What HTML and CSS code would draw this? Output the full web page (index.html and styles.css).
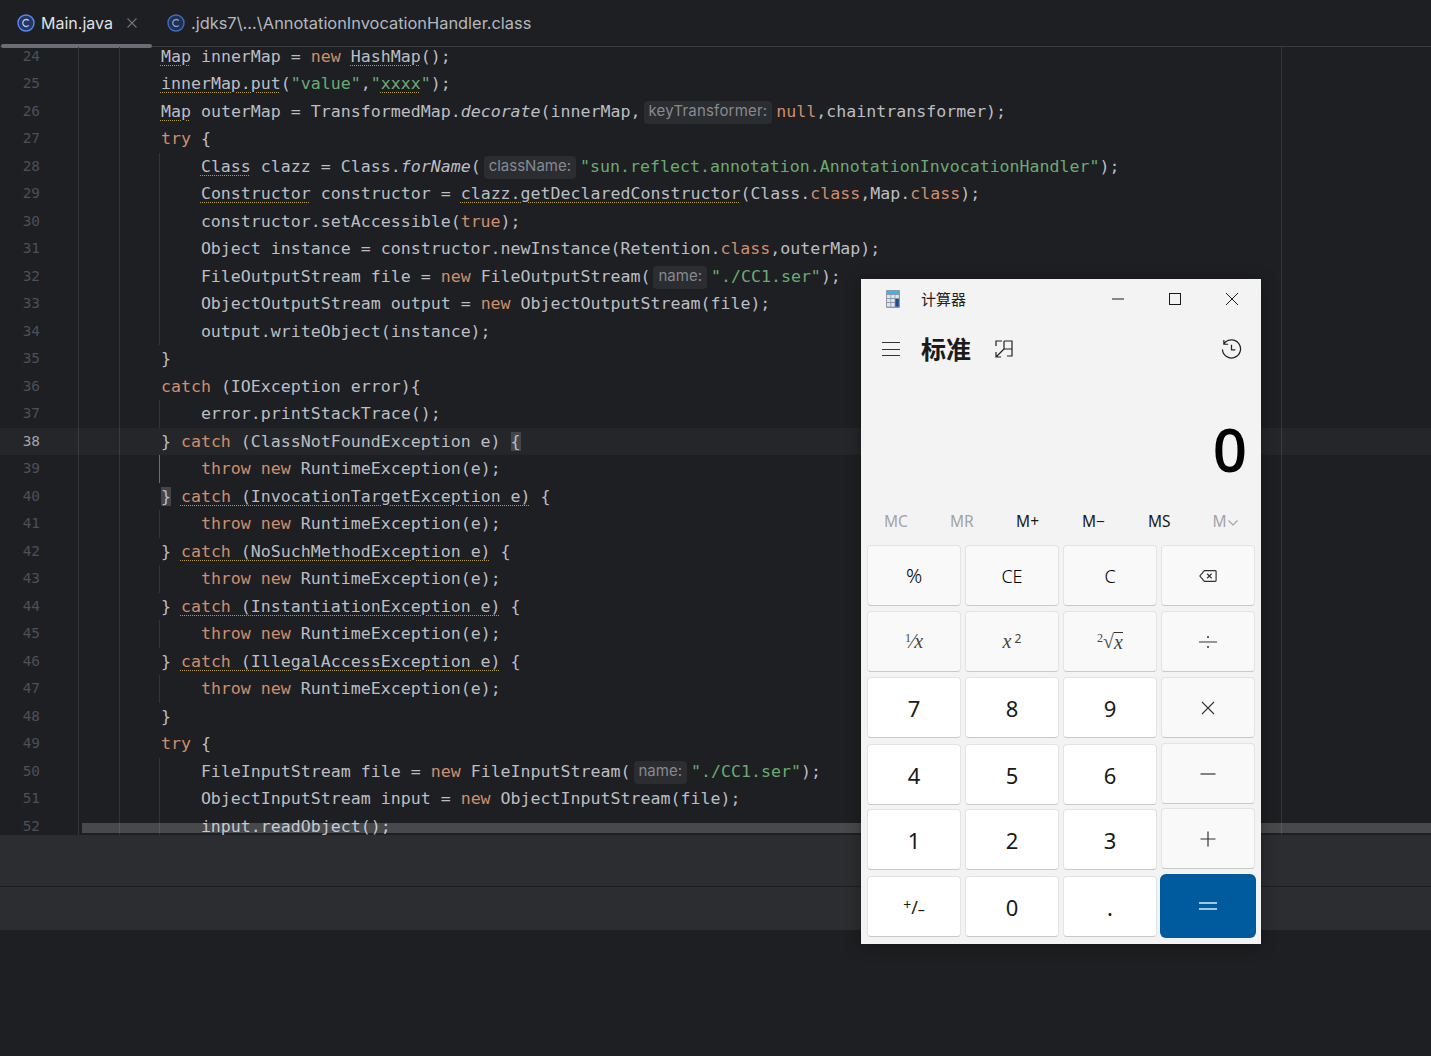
FILE: index.html
```html
<!DOCTYPE html>
<html lang="zh-CN">
<head>
  <meta charset="UTF-8">
  <title>Main.java</title>
  <link rel="stylesheet" href="styles.css">
</head>
<body>
  <div class="tabs">
    <div class="tab active">
      <svg class="tab-icon" viewBox="0 0 18 18"><circle cx="9" cy="9" r="8" fill="#26365c" stroke="#548af7" stroke-width="1.4"/><path d="M11.800 6.600A3.500 3.500 0 1 0 11.800 11.400" fill="none" stroke="#a9c3fa" stroke-width="1.300"/></svg>
      <span>Main.java</span>
      <svg class="tab-close" viewBox="0 0 10 10"><path d="M.5.5l9 9M9.5.5l-9 9" stroke="#6f737a" stroke-width="1.1"/></svg>
    </div>
    <div class="tab other">
      <svg class="tab-icon" viewBox="0 0 18 18"><circle cx="9" cy="9" r="8" fill="#22304f" stroke="#3f6bc4" stroke-width="1.4"/><path d="M11.800 6.600A3.500 3.500 0 1 0 11.800 11.400" fill="none" stroke="#7f9bd6" stroke-width="1.300"/></svg>
      <span>.jdks7\...\AnnotationInvocationHandler.class</span>
    </div>
  </div>

  <div class="editor">
    <div class="lines">
      <div class="line"><span class="num">24</span><code>        <u>Map</u> innerMap = <b>new</b> <u>HashMap</u>();</code></div>
      <div class="line"><span class="num">25</span><code>        <u>innerMap.put</u>(<s>"value"</s>,<s>"<u>xxxx</u>"</s>);</code></div>
      <div class="line"><span class="num">26</span><code>        <u>Map</u> outerMap = TransformedMap.<i>decorate</i>(innerMap,<span class="hint long">keyTransformer:</span><b>null</b>,chaintransformer);</code></div>
      <div class="line"><span class="num">27</span><code>        <b>try</b> {</code></div>
      <div class="line in"><span class="num">28</span><code>            <u>Class</u> clazz = Class.<i>forName</i>(<span class="hint">className:</span><s>"sun.reflect.annotation.AnnotationInvocationHandler"</s>);</code></div>
      <div class="line in"><span class="num">29</span><code>            <u>Constructor</u> constructor = <u>clazz.getDeclaredConstructor</u>(Class.<b>class</b>,Map.<b>class</b>);</code></div>
      <div class="line in"><span class="num">30</span><code>            constructor.setAccessible(<b>true</b>);</code></div>
      <div class="line in"><span class="num">31</span><code>            Object instance = constructor.newInstance(Retention.<b>class</b>,outerMap);</code></div>
      <div class="line in"><span class="num">32</span><code>            FileOutputStream file = <b>new</b> FileOutputStream(<span class="hint">name:</span><s>"./CC1.ser"</s>);</code></div>
      <div class="line in"><span class="num">33</span><code>            ObjectOutputStream output = <b>new</b> ObjectOutputStream(file);</code></div>
      <div class="line in"><span class="num">34</span><code>            output.writeObject(instance);</code></div>
      <div class="line"><span class="num">35</span><code>        }</code></div>
      <div class="line"><span class="num">36</span><code>        <b>catch</b> (IOException error){</code></div>
      <div class="line in"><span class="num">37</span><code>            error.printStackTrace();</code></div>
      <div class="line current"><span class="num">38</span><code>        } <b>catch</b> (ClassNotFoundException e) <em>{</em></code></div>
      <div class="line in hot"><span class="num">39</span><code>            <b>throw</b> <b>new</b> RuntimeException(e);</code></div>
      <div class="line"><span class="num">40</span><code>        <em>}</em> <u><b>catch</b> (InvocationTargetException e)</u> {</code></div>
      <div class="line in"><span class="num">41</span><code>            <b>throw</b> <b>new</b> RuntimeException(e);</code></div>
      <div class="line"><span class="num">42</span><code>        } <u><b>catch</b> (NoSuchMethodException e)</u> {</code></div>
      <div class="line in"><span class="num">43</span><code>            <b>throw</b> <b>new</b> RuntimeException(e);</code></div>
      <div class="line"><span class="num">44</span><code>        } <u><b>catch</b> (InstantiationException e)</u> {</code></div>
      <div class="line in"><span class="num">45</span><code>            <b>throw</b> <b>new</b> RuntimeException(e);</code></div>
      <div class="line"><span class="num">46</span><code>        } <u><b>catch</b> (IllegalAccessException e)</u> {</code></div>
      <div class="line in"><span class="num">47</span><code>            <b>throw</b> <b>new</b> RuntimeException(e);</code></div>
      <div class="line"><span class="num">48</span><code>        }</code></div>
      <div class="line"><span class="num">49</span><code>        <b>try</b> {</code></div>
      <div class="line in"><span class="num">50</span><code>            FileInputStream file = <b>new</b> FileInputStream(<span class="hint">name:</span><s>"./CC1.ser"</s>);</code></div>
      <div class="line in"><span class="num">51</span><code>            ObjectInputStream input = <b>new</b> ObjectInputStream(file);</code></div>
      <div class="line in"><span class="num">52</span><code>            input.readObject();</code></div>
    </div>
    <div class="hscroll"></div>
  </div>

  <div class="panel"></div>
  <div class="panel short"></div>

  <div class="calc">
    <div class="calc-title">
      <svg class="calc-logo" viewBox="0 0 16 18">
        <rect x="1" y="0" width="14" height="18" rx="1" fill="#8d9aa6"/>
        <rect x="2" y="1" width="12" height="3" fill="#35b6ee"/>
        <g fill="#dfe5ea">
          <rect x="2" y="5" width="3.4" height="3"/><rect x="6.2" y="5" width="3.4" height="3"/><rect x="10.4" y="5" width="3.4" height="3"/>
          <rect x="2" y="9" width="3.4" height="3"/><rect x="6.2" y="9" width="3.4" height="3"/>
          <rect x="2" y="13" width="3.4" height="3.6"/><rect x="6.2" y="13" width="3.4" height="3.6"/>
        </g>
        <rect x="10.4" y="9" width="3.4" height="7.6" fill="#17508f"/>
      </svg>
      <span class="calc-name">计算器</span>
      <div class="win-btns">
        <svg viewBox="0 0 14 14"><path d="M1 7h12" stroke="#1a1a1a"/></svg>
        <svg viewBox="0 0 14 14"><rect x="1.5" y="1.5" width="11" height="11" fill="none" stroke="#1a1a1a"/></svg>
        <svg viewBox="0 0 14 14"><path d="M1 1l12 12M13 1L1 13" stroke="#1a1a1a"/></svg>
      </div>
    </div>

    <div class="calc-head">
      <svg class="menu-icon" viewBox="0 0 18 14"><path d="M0 .5h18M0 7.500h18M0 13.500h18" stroke="#333"/></svg>
      <span class="mode">标准</span>
      <svg class="overlay-icon" viewBox="0 0 18 18"><path d="M1 6V1h6M9 1h8v15h-5M9 1v8h8M9 9L1 17M1 12v5h5" fill="none" stroke="#222" stroke-width="1.200"/></svg>
      <svg class="history-icon" viewBox="0 0 22 22"><path d="M3.500 4.500A9.500 9.500 0 1 1 1.500 11M3 1v4.500h4.500M11 6v5.500h4" fill="none" stroke="#222" stroke-width="1.300"/></svg>
    </div>

    <div class="display">0</div>

    <div class="memory">
      <span class="off">MC</span><span class="off">MR</span><span>M+</span><span>M&minus;</span><span>MS</span>
      <span class="off">M<svg class="chev" viewBox="0 0 10 6"><path d="M.5.500L5 5 9.500.500" fill="none" stroke="#a3a3a3" stroke-width="1.100"/></svg></span>
    </div>

    <div class="keys">
      <button class="key fn big">%</button>
      <button class="key fn">CE</button>
      <button class="key fn">C</button>
      <button class="key fn"><svg class="op-icon" viewBox="0 0 20 14"><path d="M6 1h12a1 1 0 0 1 1 1v10a1 1 0 0 1-1 1H6L1 7z" fill="none" stroke="#333" stroke-width="1.300"/><path d="M9 4.500l5 5M14 4.500l-5 5" stroke="#333" stroke-width="1.300"/></svg></button>

      <button class="key fn math"><sup>1</sup>&frasl;<i>x</i></button>
      <button class="key fn math"><i>x</i><sup class="gap">2</sup></button>
      <button class="key fn math"><sup>2</sup>&radic;<i class="over">x</i></button>
      <button class="key fn"><svg class="op-icon" viewBox="0 0 18 14"><path d="M0 7h18" stroke="#333"/><circle cx="9" cy="2" r="1" fill="#333"/><circle cx="9" cy="12" r="1" fill="#333"/></svg></button>

      <button class="key num-key">7</button>
      <button class="key num-key">8</button>
      <button class="key num-key">9</button>
      <button class="key fn"><svg class="op-icon" viewBox="0 0 14 14"><path d="M1 1l12 12M13 1L1 13" stroke="#333" stroke-width="1.100"/></svg></button>

      <button class="key num-key">4</button>
      <button class="key num-key">5</button>
      <button class="key num-key">6</button>
      <button class="key fn raised"><svg class="op-icon large" viewBox="0 0 16 16"><path d="M.5 8h15" stroke="#333" stroke-width="1.200"/></svg></button>

      <button class="key num-key">1</button>
      <button class="key num-key">2</button>
      <button class="key num-key">3</button>
      <button class="key fn raised"><svg class="op-icon large" viewBox="0 0 16 16"><path d="M.5 8h15M8 .5v15" stroke="#333" stroke-width="1.200"/></svg></button>

      <button class="key num-key sign"><sup>+</sup>/<sub>&ndash;</sub></button>
      <button class="key num-key">0</button>
      <button class="key num-key">.</button>
      <button class="key equals"><svg class="op-icon" viewBox="0 0 18 10"><path d="M0 2h18M0 8h18" stroke="#dbe8f4" stroke-width="1.500"/></svg></button>
    </div>
  </div>
</body>
</html>
```

FILE: styles.css
```css
body {
  margin: 0;
  height: 1056px;
  overflow: hidden;
  background-color: #1e1f22;
  font-family: Inter, "Noto Sans", sans-serif;
}

/* tabs */
.tabs {
  display: flex;
  height: 46px;
  border-bottom: 1px solid #393b40;
  box-sizing: content-box;
}
.tab {
  position: relative;
  display: flex;
  align-items: center;
  gap: 6px;
  height: 46px;
  padding: 0 0 0 17px;
  font-size: 16px;
  color: #dfe1e5;
}
.tab.active {
  width: 152px;
  box-sizing: border-box;
}
.tab.active::after {
  content: "";
  position: absolute;
  left: 1px;
  right: 0;
  top: 44px;
  height: 4px;
  border-radius: 2px;
  background-color: #6a6d73;
}
.tab.other {
  padding-left: 15px;
  font-size: 16.4px;
  color: #b4b8bf;
}
.tab-icon {
  flex: none;
  width: 18px;
  height: 18px;
}
.tab-close {
  flex: none;
  width: 10px;
  height: 10px;
  margin-left: 8px;
}

/* editor */
.editor {
  position: relative;
  height: 788px;
  overflow: hidden;
  background-image:
    linear-gradient(#313438, #313438),
    linear-gradient(#313438, #313438),
    linear-gradient(#313438, #313438);
  background-size: 1px 100%;
  background-position: 78px 0, 119px 0, 1281px 0;
  background-repeat: no-repeat;
}
.lines {
  margin-top: -4.5px;
}
.line {
  display: flex;
  height: 27.5px;
  line-height: 27.5px;
  font-family: "DejaVu Sans Mono", monospace;
  font-size: 16.6px;
  color: #bcbec4;
  white-space: pre;
}
.line.in {
  background: linear-gradient(#313438, #313438) 159px 0 / 1px 100% no-repeat;
}
.line.hot {
  background-image: linear-gradient(#6b6e75, #6b6e75);
}
.line.current {
  background-color: rgba(255, 255, 255, 0.035);
}
.num {
  flex: none;
  width: 40px;
  text-align: right;
  font-size: 14.4px;
  color: #4b5059;
}
.current .num {
  color: #a1a3ab;
}
code {
  margin-left: 41px;
  font-family: inherit;
}
code b {
  font-weight: normal;
  color: #cf8e6d;
}
code s {
  text-decoration: none;
  color: #6aab73;
}
code i {
  font-style: italic;
}
code u {
  text-decoration: underline dotted #b39b45 1px;
  text-underline-offset: 3px;
}
code em {
  font-style: normal;
  background-color: #43454a;
}
.hint {
  display: inline-block;
  height: 23px;
  line-height: 20px;
  margin: 0 4px 0 3px;
  padding: 0 5px;
  border-radius: 4px;
  background-color: #2b2d30;
  font-family: Inter, "Noto Sans", sans-serif;
  font-size: 15px;
  color: #868a91;
  vertical-align: 1px;
}
.hint.long {
  letter-spacing: 0.2px;
}
.hscroll {
  position: absolute;
  left: 82px;
  right: 0;
  top: 776px;
  height: 10px;
  background-color: rgba(255, 255, 255, 0.19);
}

/* bottom panels */
.panel {
  height: 51px;
  background-color: #2b2d30;
  border-bottom: 1px solid #1e1f22;
}
.panel.short {
  height: 43px;
  border-bottom: 0;
}

/* calculator window */
.calc {
  position: absolute;
  left: 861px;
  top: 279px;
  width: 400px;
  height: 665px;
  display: flex;
  flex-direction: column;
  background-color: #f3f3f3;
  box-shadow: 0 2px 14px rgba(0, 0, 0, 0.35);
  font-family: "Open Sans", "Noto Sans CJK SC", sans-serif;
  color: #1a1a1a;
}
.calc-title {
  display: flex;
  align-items: center;
  height: 40px;
  padding-left: 24px;
}
.calc-logo {
  width: 16px;
  height: 18px;
}
.calc-name {
  margin: -2px 0 0 20px;
  font-family: "Noto Sans CJK SC", sans-serif;
  font-size: 15px;
  color: #222;
}
.win-btns {
  display: flex;
  gap: 43px;
  margin-left: auto;
  margin-right: 22px;
}
.win-btns svg {
  width: 14px;
  height: 14px;
}
.calc-head {
  display: flex;
  align-items: center;
  height: 60px;
  padding-left: 21px;
}
.menu-icon {
  width: 18px;
  height: 14px;
}
.mode {
  margin: -2px 0 0 21px;
  font-family: "Noto Sans CJK SC", sans-serif;
  font-size: 25px;
  font-weight: 700;
  color: #1b1b1b;
}
.overlay-icon {
  width: 18px;
  height: 18px;
  margin-left: 24px;
}
.history-icon {
  width: 21px;
  height: 21px;
  margin-left: auto;
  margin-right: 19px;
}
.display {
  height: 124px;
  padding-right: 14px;
  line-height: 140px;
  text-align: right;
  font-size: 60px;
  font-weight: 600;
  color: #000;
}
.memory {
  display: grid;
  grid-template-columns: repeat(6, 1fr);
  height: 36px;
  padding: 0 3px 0 2px;
  line-height: 36px;
  text-align: center;
  font-family: "Noto Sans", sans-serif;
  font-size: 15.5px;
}
.memory .off {
  color: #a3a3a3;
}
.chev {
  width: 10px;
  height: 6px;
  margin-left: 1px;
  vertical-align: 1px;
}
.keys {
  display: grid;
  grid-template-columns: repeat(4, 94px);
  grid-template-rows: 66px 66px 67px 65px 67px 62px;
  column-gap: 4px;
  padding: 6px;
}
.key {
  display: flex;
  align-items: center;
  justify-content: center;
  height: 61px;
  padding: 0;
  border: 1px solid #e3e3e3;
  border-bottom-color: #c9c9c9;
  border-radius: 4px;
  font-family: "Noto Sans", sans-serif;
  font-size: 18px;
  font-weight: 300;
  color: #000;
}
.key.fn {
  background-color: #f9f9f9;
}
.key.big {
  font-size: 20px;
}
.key.num-key {
  background-color: #fff;
  font-size: 22px;
  font-weight: 400;
  color: #1a1a1a;
}
.key.raised {
  margin-top: -1px;
}
.key.math {
  font-family: "Liberation Serif", serif;
  font-size: 20px;
  font-weight: 400;
  color: #444;
}
.key sup {
  align-self: flex-start;
  margin-top: 19px;
  font-size: 12px;
}
.key sup.gap {
  margin-top: 18px;
  margin-left: 3px;
  font-family: "Noto Sans", sans-serif;
  font-size: 12px;
}
.key .over {
  border-top: 1px solid #333;
  line-height: 18px;
}
.key.sign {
  font-size: 18px;
}
.key.sign sup {
  margin-top: 18px;
  font-size: 14px;
}
.key.sign sub {
  align-self: flex-end;
  margin-bottom: 17px;
  font-size: 14px;
}
.key.equals {
  height: 64px;
  margin: -2px -1px 0;
  border: 0;
  border-radius: 6px;
  background-color: #005a9e;
}
.op-icon {
  width: 18px;
  height: 14px;
}
.op-icon.large {
  width: 16px;
  height: 16px;
}
```
